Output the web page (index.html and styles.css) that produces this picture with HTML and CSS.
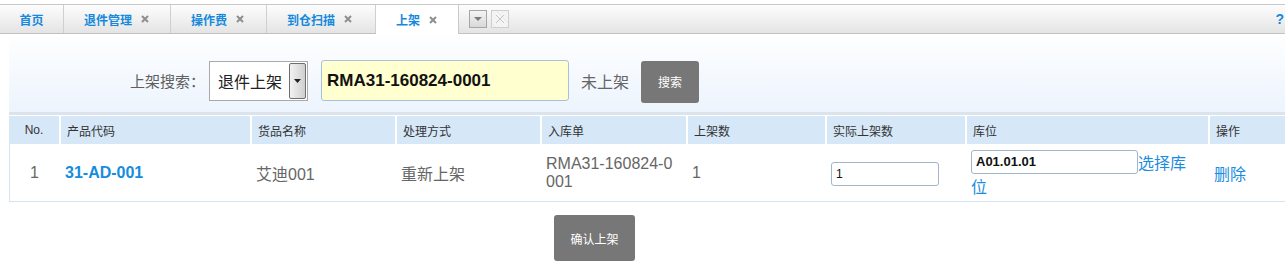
FILE: index.html
```html
<!DOCTYPE html>
<html lang="zh-CN">
<head>
    <meta charset="UTF-8">
    <title>上架</title>
    <link rel="stylesheet" href="styles.css">
</head>
<body>
    <div class="tabbar">
        <div class="tab tab-home">首页</div>
        <div class="tab w107">退件管理 <span class="tab-close"><svg width="8" height="8" viewBox="0 0 8 8"><path d="M1 1L7 7M7 1L1 7" stroke="#8e8e8e" stroke-width="2"/></svg></span></div>
        <div class="tab w96">操作费 <span class="tab-close"><svg width="8" height="8" viewBox="0 0 8 8"><path d="M1 1L7 7M7 1L1 7" stroke="#8e8e8e" stroke-width="2"/></svg></span></div>
        <div class="tab w109">到仓扫描 <span class="tab-close"><svg width="8" height="8" viewBox="0 0 8 8"><path d="M1 1L7 7M7 1L1 7" stroke="#8e8e8e" stroke-width="2"/></svg></span></div>
        <div class="tab tab-active">上架 <span class="tab-close"><svg width="8" height="8" viewBox="0 0 8 8"><path d="M1 1L7 7M7 1L1 7" stroke="#8e8e8e" stroke-width="2"/></svg></span></div>
        <div class="tab-tools">
            <span class="tool-btn tool-menu"><svg width="8" height="5" viewBox="0 0 8 5"><path d="M0 0H8L4 4Z" fill="#7a7a7a"/></svg></span>
            <span class="tool-btn tool-closeall"><svg width="10" height="10" viewBox="0 0 10 10"><path d="M1 1L9 9M9 1L1 9" stroke="#c4c4c4" stroke-width="1"/></svg></span>
        </div>
        <div class="help">?</div>
    </div>

    <div class="panel">
        <div class="search">
            <span class="search-label">上架搜索：</span>
            <div class="select">
                <span class="select-text">退件上架</span>
                <span class="select-arrow"><svg width="7" height="4" viewBox="0 0 7 4"><path d="M0 0H7L3.5 4Z" fill="#222"/></svg></span>
            </div>
            <input class="search-input" type="text" value="RMA31-160824-0001">
            <span class="search-status">未上架</span>
            <button class="btn btn-search">搜索</button>
        </div>

        <div class="band"></div>
        <table class="grid">
            <colgroup>
                <col style="width: 50px">
                <col style="width: 191px">
                <col style="width: 145px">
                <col style="width: 145px">
                <col style="width: 146px">
                <col style="width: 139px">
                <col style="width: 140px">
                <col style="width: 243px">
                <col style="width: 91px">
            </colgroup>
            <thead>
                <tr>
                    <th class="c-no">No.</th>
                    <th>产品代码</th>
                    <th>货品名称</th>
                    <th>处理方式</th>
                    <th>入库单</th>
                    <th>上架数</th>
                    <th>实际上架数</th>
                    <th>库位</th>
                    <th>操作</th>
                </tr>
            </thead>
            <tbody>
                <tr>
                    <td class="c-no">1</td>
                    <td><a class="code-link">31-AD-001</a></td>
                    <td>艾迪001</td>
                    <td>重新上架</td>
                    <td class="c-rma">RMA31-160824-0001</td>
                    <td>1</td>
                    <td><input class="qty-input" type="text" value="1"></td>
                    <td class="c-loc"><input class="loc-input" type="text" value="A01.01.01"><a class="link">选择库位</a></td>
                    <td><a class="link">删除</a></td>
                </tr>
            </tbody>
        </table>
    </div>

    <div class="footer">
        <button class="btn btn-confirm">确认上架</button>
    </div>
</body>
</html>
```

FILE: styles.css
```css
body {
    margin: 0;
    font-family: "Liberation Sans", "Noto Sans CJK SC", sans-serif;
    background: #fff;
    overflow: hidden;
    width: 1285px;
}
.tabbar {
    margin-top: 4px;
    height: 28px;
    display: flex;
    align-items: stretch;
    border-top: 1px solid #c9c9c9;
    border-bottom: 1px solid #c2c2c2;
    background: linear-gradient(#fdfdfd, #e4e4e4);
}
.tab {
    display: flex;
    align-items: center;
    box-sizing: border-box;
    padding-left: 20px;
    border-right: 1px solid #cfcfcf;
    font-size: 12px;
    font-weight: bold;
    color: #1689dc;
}
.tab-home {
    width: 64px;
    padding-left: 0;
    justify-content: center;
}
.w107 { width: 107px; }
.w96 { width: 96px; }
.w109 { width: 109px; }
.tab-active {
    width: 83px;
    background: #fff;
    margin-bottom: -1px;
    border-right: 1px solid #c9c9c9;
}
.tab-close {
    display: inline-flex;
    margin-left: 9px;
}
.tab-tools {
    display: flex;
    align-items: center;
    gap: 4px;
    padding-left: 10px;
}
.tool-btn {
    box-sizing: border-box;
    width: 18px;
    height: 18px;
    display: flex;
    align-items: center;
    justify-content: center;
}
.tool-menu {
    border: 1px solid #a6a6a6;
    background: linear-gradient(#f4f4f4, #d9d9d9);
}
.tool-closeall {
    border: 1px solid #cfcfcf;
    background: repeating-linear-gradient(45deg, #f6f6f6 0 2px, #ececec 2px 3px);
}
.help {
    margin-left: auto;
    padding-right: 1px;
    display: flex;
    align-items: center;
    font-size: 14px;
    font-weight: bold;
    color: #1689dc;
}
.panel {
    margin: 3px 0 0 9px;
    width: 1290px;
}
.search {
    height: 75px;
    box-sizing: border-box;
    padding: 12px 0 0 121px;
    display: flex;
    align-items: center;
    background: linear-gradient(#fefeff, #ecf4fd);
}
.search-label {
    font-size: 15px;
    color: #5f5f5f;
    margin-right: 4px;
}
.select {
    box-sizing: border-box;
    width: 99px;
    height: 40px;
    border: 1px solid #a9a9a9;
    background: #fff;
    display: flex;
    align-items: center;
    justify-content: space-between;
    padding: 1px;
}
.select-text {
    font-size: 16px;
    color: #222;
    padding-left: 7px;
}
.select-arrow {
    box-sizing: border-box;
    width: 17px;
    height: 100%;
    border: 1px solid #6e6e6e;
    border-radius: 2px;
    background: linear-gradient(90deg, #f2f2f2, #cfcfcf);
    display: flex;
    align-items: center;
    justify-content: center;
}
.search-input {
    box-sizing: border-box;
    width: 248px;
    height: 41px;
    margin-left: 13px;
    padding: 0 5px;
    border: 1px solid #a6c1dc;
    border-radius: 3px;
    background: #ffffcf;
    font-family: inherit;
    font-size: 17px;
    font-weight: bold;
    color: #111;
}
.search-status {
    font-size: 16px;
    color: #666;
    margin-left: 12px;
}
.btn {
    border: none;
    border-radius: 3px;
    background: #777;
    color: #fff;
    font-family: inherit;
    font-size: 12px;
    cursor: pointer;
}
.btn-search {
    width: 58px;
    height: 42px;
    margin: 2px 0 0 12px;
}
.band {
    height: 3px;
    background: #dce3eb;
    border-bottom: 1px solid #fff;
}
.grid {
    border-collapse: separate;
    border-spacing: 0;
    width: 1290px;
    table-layout: fixed;
}
.grid th {
    height: 28px;
    padding: 0 0 0 6px;
    background: #d6e7f8;
    border-left: 2px solid #fff;
    font-size: 12px;
    font-weight: normal;
    color: #333;
    text-align: left;
}
.grid th:first-child {
    border-left: none;
}
.grid td {
    height: 55px;
    padding: 0 8px 0 6px;
    border-bottom: 1px solid #d6e4f1;
    font-size: 16px;
    color: #666;
    vertical-align: middle;
}
.grid td:first-child {
    border-left: 1px solid #d6e4f1;
}
.grid .c-no {
    text-align: center;
    padding: 0;
}
.grid td.c-rma {
    word-break: break-all;
    padding-right: 10px;
}
.grid td.c-loc {
    padding-right: 16px;
    padding-top: 2px;
}
.code-link {
    font-weight: bold;
    color: #168cde;
}
.link {
    color: #1a8ddf;
}
.qty-input {
    box-sizing: border-box;
    width: 108px;
    height: 24px;
    padding: 0 4px;
    border: 1px solid #9fb6cd;
    border-radius: 3px;
    font-family: inherit;
    font-size: 12px;
    color: #111;
    margin-top: 3px;
}
.loc-input {
    box-sizing: border-box;
    width: 167px;
    height: 24px;
    padding: 0 4px;
    border: 1px solid #9fb6cd;
    border-radius: 3px;
    font-family: inherit;
    font-size: 13px;
    font-weight: bold;
    color: #111;
    vertical-align: top;
}
.footer {
    padding: 13px 0 0 554px;
}
.btn-confirm {
    width: 81px;
    height: 46px;
}
```
